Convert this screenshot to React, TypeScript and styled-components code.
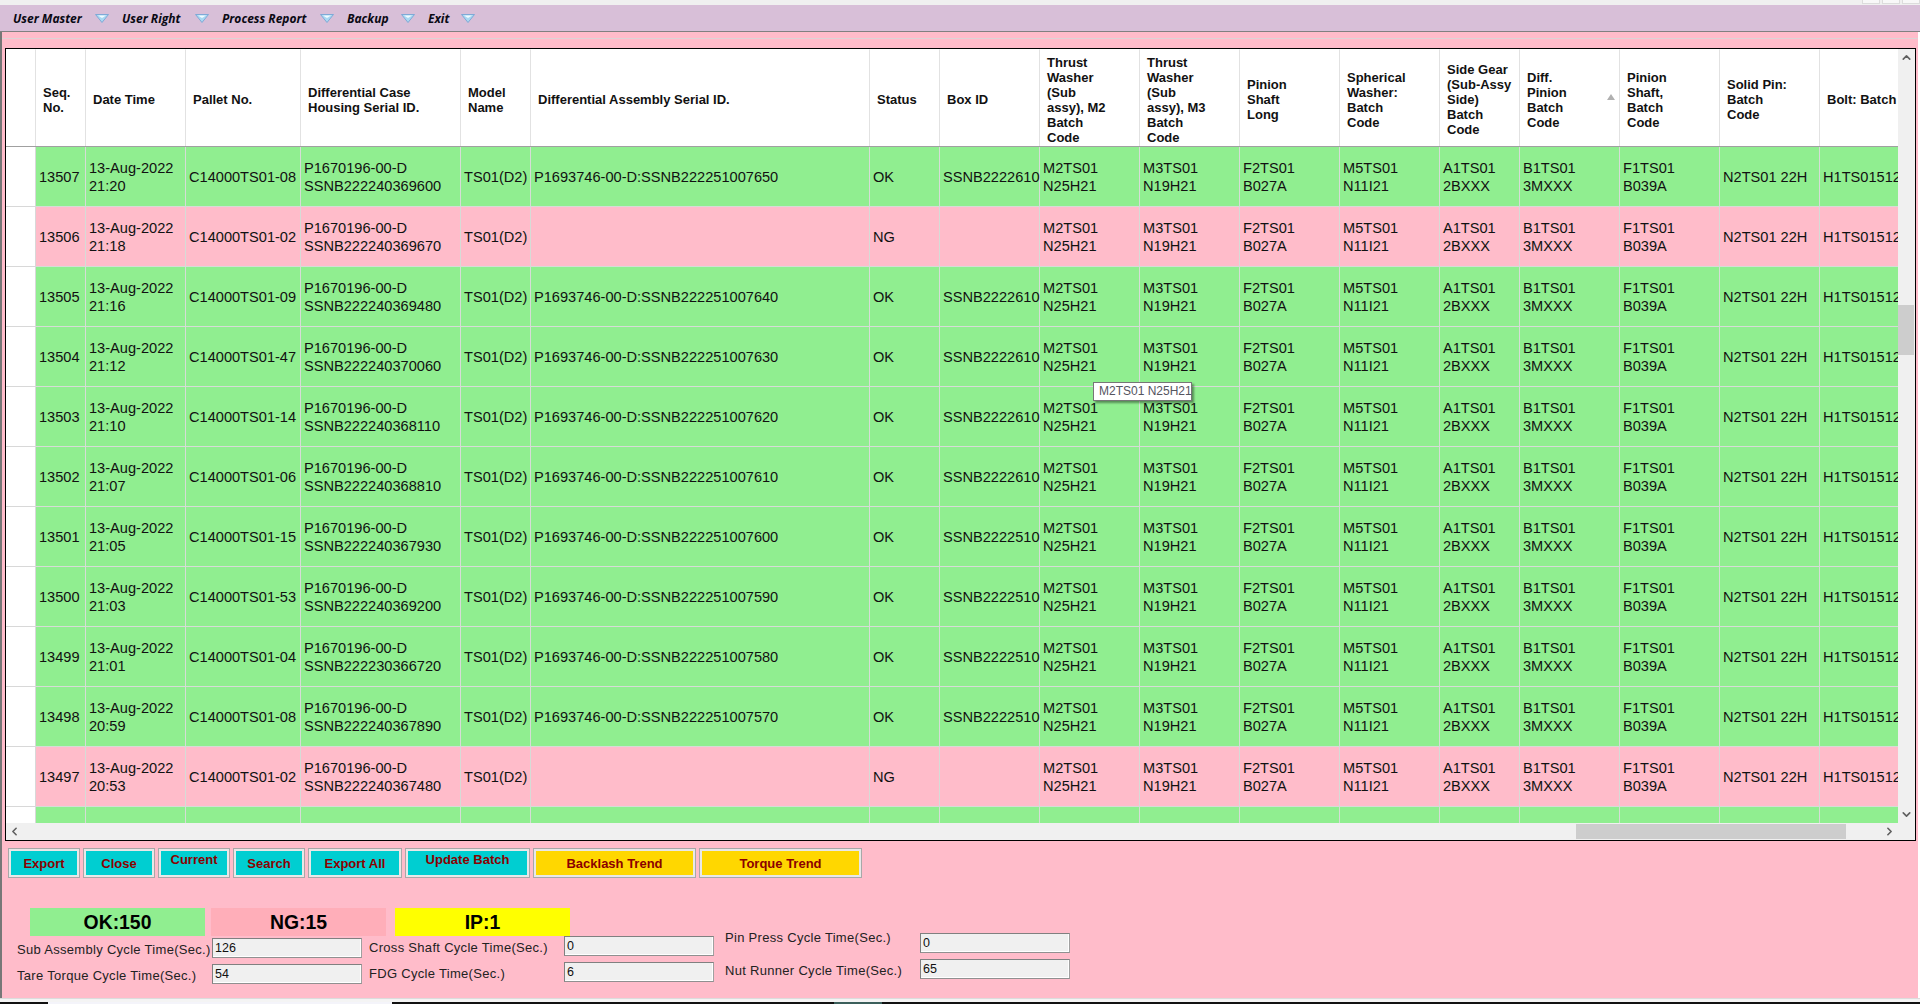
import * as React from 'react';
import styled, { createGlobalStyle } from 'styled-components';
import { ChevronDown, ChevronLeft, ChevronRight, ChevronUp } from 'lucide-react';

const PINK = '#ffbcca';
const GREEN = '#90ee90';
const COLUMNS = '30px 50px 100px 115px 160px 70px 339px 70px 100px 100px 100px 100px 100px 80px 100px 100px 100px 100px';

const GlobalStyle = createGlobalStyle`
  html, body {
    margin: 0;
    height: 1004px;
    overflow: hidden;
    background: #fff;
  }
  * {
    box-sizing: border-box;
  }
`;

const Page = styled.div`
  display: flex;
  flex-direction: column;
  width: 1920px;
  height: 1004px;
  font-family: "Liberation Sans", Arial, sans-serif;
  color: #111;
`;

const TitleStrip = styled.div`
  display: flex;
  justify-content: flex-end;
  gap: 2px;
  height: 5px;
  background: #f0f0f0;
`;

const WindowButton = styled.span`
  width: 18px;
  height: 4px;
  background: #f8f8f8;
  border: 1px solid #dcdcdc;
  border-top: 0;
`;

const MenuBar = styled.nav`
  display: flex;
  align-items: center;
  height: 27px;
  padding-left: 13px;
  background: #d8bfd8;
  border-bottom: 1px solid #808080;
`;

const MenuItem = styled.div<{ $width: number }>`
  display: flex;
  align-items: center;
  justify-content: space-between;
  width: ${p => p.$width}px;
  padding-right: 13px;
  font-family: "Open Sans", sans-serif;
  font-size: 12px;
  font-weight: 700;
  font-style: italic;
  color: #0a0a14;
`;

const Window = styled.main`
  flex: 1;
  display: flex;
  flex-direction: column;
  width: 1918px;
  background: ${PINK};
  border-left: 2px solid #777;
`;

const TabLine = styled.div`
  height: 1px;
  margin: 6px 0 9px;
  background: #dcd4d6;
`;

const GridPanel = styled.section`
  position: relative;
  display: flex;
  flex-direction: column;
  width: 1911px;
  height: 793px;
  margin-left: 3px;
  background: #fff;
  border: 1px solid #000;
`;

const GridMain = styled.div`
  flex: 1;
  display: flex;
  min-height: 0;
`;

const Viewport = styled.div`
  flex: 1;
  min-width: 0;
  overflow: hidden;
`;

const HeaderRow = styled.div`
  display: grid;
  grid-template-columns: ${COLUMNS};
  width: 1921px;
  height: 98px;
  background: #fff;
  border-bottom: 1px solid #a0a0a0;
`;

const HeaderCell = styled.div`
  position: relative;
  display: flex;
  align-items: center;
  padding: 3px 0 0 7px;
  font-size: 13px;
  font-weight: 700;
  line-height: 15px;
  white-space: pre-line;
  border-right: 1px solid #e2e2e2;
  border-top: 1px solid #fff;
`;

const SortArrow = styled.span`
  position: absolute;
  right: 4px;
  top: 44px;
  width: 0;
  height: 0;
  border-left: 4.5px solid transparent;
  border-right: 4.5px solid transparent;
  border-bottom: 6px solid #b0b0b0;
`;

const DataRow = styled.div<{ $ok: boolean }>`
  display: grid;
  grid-template-columns: ${COLUMNS};
  width: 1921px;
  height: 60px;
  background: ${p => (p.$ok ? GREEN : PINK)};
`;

const RowHead = styled.div`
  background: #fff;
  border-right: 1px solid #d8d8d8;
  border-bottom: 1px solid #d8d8d8;
`;

const Cell = styled.div`
  display: flex;
  align-items: center;
  padding-left: 3px;
  font-size: 14.6px;
  line-height: 18px;
  white-space: pre;
  border-right: 1px solid #d6dcd6;
  border-bottom: 1px solid #d6dcd6;
`;

const VScroll = styled.div`
  display: flex;
  flex-direction: column;
  width: 17px;
  background: #f0f0f0;
`;

const ArrowBox = styled.span`
  display: flex;
  flex: none;
  align-items: center;
  justify-content: center;
  width: 17px;
  height: 17px;
  color: #606060;
`;

const VThumb = styled.div`
  width: 16px;
  height: 50px;
  margin-top: 239px;
  margin-bottom: auto;
  background: #cdcdcd;
`;

const HScroll = styled.div`
  display: flex;
  flex: none;
  align-items: center;
  height: 17px;
  padding-right: 17px;
  background: #f0f0f0;
`;

const HThumb = styled.div`
  width: 270px;
  height: 15px;
  margin-left: 1553px;
  margin-right: auto;
  background: #cdcdcd;
`;

const Tooltip = styled.div`
  position: absolute;
  left: 1087px;
  top: 333px;
  width: 99px;
  height: 19px;
  padding-left: 5px;
  font-size: 12px;
  line-height: 17px;
  color: #55555f;
  background: #fff;
  border: 1px solid #767676;
  box-shadow: 2px 2px 2px rgba(0, 0, 0, 0.4);
  white-space: nowrap;
`;

const ButtonRow = styled.div`
  display: flex;
  gap: 3px;
  margin: 7px 0 0 6px;
`;

const ActionButton = styled.button<{ $width: number; $tone: string; $raised?: boolean }>`
  width: ${p => p.$width}px;
  height: 30px;
  padding: 0 0 ${p => (p.$raised ? 8 : 0)}px;
  font-family: "Liberation Sans", Arial, sans-serif;
  font-size: 13px;
  font-weight: 700;
  color: #8b0000;
  background: ${p => p.$tone};
  border: 1px solid #a8a8a8;
  box-shadow: inset 0 0 0 2px #e8e8e8;
`;

const StatRow = styled.div`
  display: flex;
  gap: 6px;
  margin: 30px 0 0 28px;
`;

const Stat = styled.div<{ $tone: string; $shift?: number }>`
  display: flex;
  align-items: center;
  justify-content: center;
  width: 175px;
  height: 28px;
  margin-left: ${p => p.$shift ?? 0}px;
  font-size: 19.4px;
  font-weight: 700;
  color: #000;
  background: ${p => p.$tone};
`;

const FieldsRow = styled.div`
  display: flex;
  gap: 7px;
  margin: -3px 0 0 15px;
`;

const FieldColumn = styled.div<{ $top: number; $shift?: number }>`
  display: flex;
  flex-direction: column;
  gap: 6px;
  padding-top: ${p => p.$top}px;
  margin-left: ${p => p.$shift ?? 0}px;
`;

const Field = styled.div`
  display: flex;
  align-items: center;
  height: 20px;
`;

const FieldLabel = styled.label<{ $raised?: boolean }>`
  flex: none;
  width: 195px;
  margin-bottom: ${p => (p.$raised ? 12 : -2)}px;
  font-size: 13px;
  letter-spacing: 0.3px;
  color: #222;
  white-space: nowrap;
`;

const FieldInput = styled.input`
  width: 150px;
  height: 20px;
  padding: 0 0 0 2px;
  font-family: "Liberation Sans", Arial, sans-serif;
  font-size: 12.5px;
  color: #111;
  background: #f0f0f0;
  border: 1px solid #808080;
  border-right-color: #a0a0a0;
  border-bottom-color: #909090;
  box-shadow: inset -1px -1px 0 #fff;
  outline: none;
`;

const BottomEdge = styled.div`
  display: flex;
  height: 6px;
  background: #f4f4f4;
  border-top: 1px solid #dcdcdc;
  flex-direction: column;
  justify-content: flex-end;
`;

const Taskbar = styled.div`
  display: flex;
  height: 2px;
  background: #111;
`;

const TaskSegment = styled.span<{ $left: number; $width: number; $tone: string }>`
  width: ${p => p.$width}px;
  margin-left: ${p => p.$left}px;
  background: ${p => p.$tone};
`;

const headers = [
  '', 'Seq.\nNo.', 'Date Time', 'Pallet No.', 'Differential Case\nHousing Serial ID.', 'Model\nName',
  'Differential Assembly Serial ID.', 'Status', 'Box ID',
  'Thrust\nWasher\n(Sub\nassy), M2\nBatch\nCode', 'Thrust\nWasher\n(Sub\nassy), M3\nBatch\nCode',
  'Pinion\nShaft\nLong', 'Spherical\nWasher:\nBatch\nCode', 'Side Gear\n(Sub-Assy\nSide)\nBatch\nCode',
  'Diff.\nPinion\nBatch\nCode', 'Pinion\nShaft,\nBatch\nCode', 'Solid Pin:\nBatch\nCode', 'Bolt: Batch',
];

const batches = [
  'M2TS01\nN25H21', 'M3TS01\nN19H21', 'F2TS01\nB027A', 'M5TS01\nN11I21', 'A1TS01\n2BXXX',
  'B1TS01\n3MXXX', 'F1TS01\nB039A', 'N2TS01 22H', 'H1TS015122',
];

// seq, time, pallet, housing, assembly, box (no assembly means NG)
const rows: [number, string, string, string, string, string][] = [
  [13507, '21:20', '08', '222240369600', '1007650', '2610'],
  [13506, '21:18', '02', '222240369670', '', ''],
  [13505, '21:16', '09', '222240369480', '1007640', '2610'],
  [13504, '21:12', '47', '222240370060', '1007630', '2610'],
  [13503, '21:10', '14', '222240368110', '1007620', '2610'],
  [13502, '21:07', '06', '222240368810', '1007610', '2610'],
  [13501, '21:05', '15', '222240367930', '1007600', '2510'],
  [13500, '21:03', '53', '222240369200', '1007590', '2510'],
  [13499, '21:01', '04', '222230366720', '1007580', '2510'],
  [13498, '20:59', '08', '222240367890', '1007570', '2510'],
  [13497, '20:53', '02', '222240367480', '', ''],
  [13496, '20:51', '11', '222240367210', '1007560', '2510'],
];

const menus: [string, number][] = [
  ['User Master', 109],
  ['User Right', 100],
  ['Process Report', 125],
  ['Backup', 81],
  ['Exit', 60],
];

const MenuArrow = () => (
  <svg width="14" height="9" viewBox="0 0 14 9">
    <path d="M0.5 0.5H13.5L7 8.5Z" fill="#a9d8f2" stroke="#7fa9d6" />
    <path d="M3 1.5H11L7 4Z" fill="#f2fbff" />
  </svg>
);

const App = () => (
  <Page>
    <GlobalStyle />
    <TitleStrip>
      <WindowButton />
      <WindowButton />
      <WindowButton />
    </TitleStrip>
    <MenuBar>
      {menus.map(([label, width]) => (
        <MenuItem key={label} $width={width}>
          {label}
          <MenuArrow />
        </MenuItem>
      ))}
    </MenuBar>
    <Window>
      <TabLine />
      <GridPanel>
        <GridMain>
          <Viewport>
            <HeaderRow>
              {headers.map((text, i) => (
                <HeaderCell key={i}>
                  {text}
                  {text.startsWith('Diff.') && <SortArrow />}
                </HeaderCell>
              ))}
            </HeaderRow>
            {rows.map(([seq, time, pallet, housing, assembly, box]) => (
              <DataRow key={seq} $ok={assembly !== ''}>
                <RowHead />
                <Cell>{seq}</Cell>
                <Cell>{`13-Aug-2022\n${time}`}</Cell>
                <Cell>{`C14000TS01-${pallet}`}</Cell>
                <Cell>{`P1670196-00-D\nSSNB${housing}`}</Cell>
                <Cell>TS01(D2)</Cell>
                <Cell>{assembly && `P1693746-00-D:SSNB222251${assembly.slice(1)}`}</Cell>
                <Cell>{assembly ? 'OK' : 'NG'}</Cell>
                <Cell>{box && `SSNB222${box}`}</Cell>
                {batches.map(code => (
                  <Cell key={code}>{code}</Cell>
                ))}
              </DataRow>
            ))}
          </Viewport>
          <VScroll>
            <ArrowBox><ChevronUp size={13} strokeWidth={3} /></ArrowBox>
            <VThumb />
            <ArrowBox><ChevronDown size={13} strokeWidth={3} /></ArrowBox>
          </VScroll>
        </GridMain>
        <HScroll>
          <ArrowBox><ChevronLeft size={13} strokeWidth={3} /></ArrowBox>
          <HThumb />
          <ArrowBox><ChevronRight size={13} strokeWidth={3} /></ArrowBox>
        </HScroll>
        <Tooltip>M2TS01 N25H21</Tooltip>
      </GridPanel>
      <ButtonRow>
        <ActionButton $width={72} $tone="#00ced1">Export</ActionButton>
        <ActionButton $width={72} $tone="#00ced1">Close</ActionButton>
        <ActionButton $width={72} $tone="#00ced1" $raised>Current</ActionButton>
        <ActionButton $width={72} $tone="#00ced1">Search</ActionButton>
        <ActionButton $width={94} $tone="#00ced1">Export All</ActionButton>
        <ActionButton $width={125} $tone="#00ced1" $raised>Update Batch</ActionButton>
        <ActionButton $width={163} $tone="#ffd700">Backlash Trend</ActionButton>
        <ActionButton $width={163} $tone="#ffd700">Torque Trend</ActionButton>
      </ButtonRow>
      <StatRow>
        <Stat $tone={GREEN}>OK:150</Stat>
        <Stat $tone="#ffaeb9">NG:15</Stat>
        <Stat $tone="#ffff00" $shift={3}>IP:1</Stat>
      </StatRow>
      <FieldsRow>
        <FieldColumn $top={5}>
          <Field>
            <FieldLabel>Sub Assembly Cycle Time(Sec.)</FieldLabel>
            <FieldInput readOnly value="126" />
          </Field>
          <Field>
            <FieldLabel>Tare Torque Cycle Time(Sec.)</FieldLabel>
            <FieldInput readOnly value="54" />
          </Field>
        </FieldColumn>
        <FieldColumn $top={3}>
          <Field>
            <FieldLabel>Cross Shaft Cycle Time(Sec.)</FieldLabel>
            <FieldInput readOnly value="0" />
          </Field>
          <Field>
            <FieldLabel>FDG Cycle Time(Sec.)</FieldLabel>
            <FieldInput readOnly value="6" />
          </Field>
        </FieldColumn>
        <FieldColumn $top={0} $shift={4}>
          <Field>
            <FieldLabel $raised>Pin Press Cycle Time(Sec.)</FieldLabel>
            <FieldInput readOnly value="0" />
          </Field>
          <Field>
            <FieldLabel>Nut Runner Cycle Time(Sec.)</FieldLabel>
            <FieldInput readOnly value="65" />
          </Field>
        </FieldColumn>
      </FieldsRow>
    </Window>
    <BottomEdge>
      <Taskbar>
        <TaskSegment $left={48} $width={344} $tone="#f4f4fa" />
        <TaskSegment $left={442} $width={48} $tone="#3b5f5b" />
      </Taskbar>
    </BottomEdge>
  </Page>
);

export default App;
